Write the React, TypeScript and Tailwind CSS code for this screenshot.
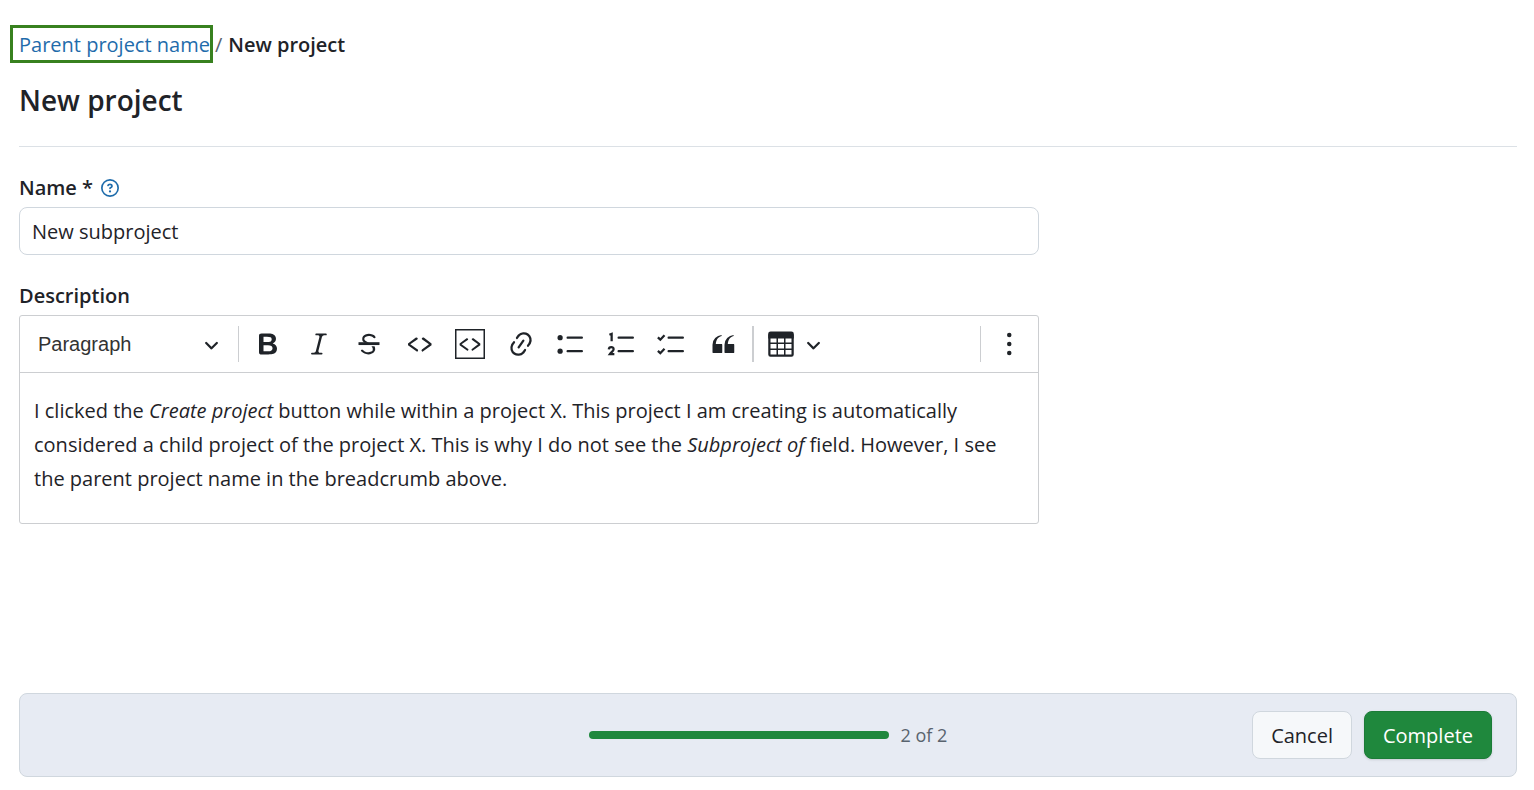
import { useState, ReactNode } from "react";

interface Tool {
  label: string;
  icon: ReactNode;
}

const CODE_PATH =
  "m12.5 5.7 5.2 3.9v1.3l-5.6 4c-.1.2-.3.2-.5.2-.3-.1-.6-.7-.6-1l.3-.4 4.7-3.5L11.5 7l-.2-.2c-.1-.3-.1-.6 0-.8.2-.2.5-.4.8-.4a.8.8 0 0 1 .4.1zm-5.2 0L2 9.6v1.3l5.6 4c.1.2.3.2.5.2.3-.1.7-.7.6-1 0-.1 0-.3-.2-.4l-5-3.5L8.2 7l.2-.2c.1-.3.1-.6 0-.8-.2-.2-.5-.4-.8-.4a.8.8 0 0 0-.3.1z";

const LINES_PATH =
  "M7 5.75c0 .414.336.75.75.75h9.5a.75.75 0 1 0 0-1.5h-9.5a.75.75 0 0 0-.75.75zm0 9c0 .414.336.75.75.75h9.5a.75.75 0 1 0 0-1.5h-9.5a.75.75 0 0 0-.75.75z";

const TOOLS: Tool[] = [
  {
    label: "Bold",
    icon: (
      <path d="M10.187 17H5.773c-.637 0-1.092-.138-1.364-.415-.273-.277-.409-.718-.409-1.323V4.738c0-.617.14-1.062.419-1.332.279-.27.73-.406 1.354-.406h4.68c.69 0 1.288.041 1.793.124.506.083.96.242 1.36.478.341.197.644.447.906.75a3.262 3.262 0 0 1 .808 2.162c0 1.401-.722 2.426-2.167 3.075C15.05 10.175 16 11.315 16 13.01a3.756 3.756 0 0 1-2.296 3.504 6.1 6.1 0 0 1-1.517.377c-.571.073-1.238.11-2 .11zm-.217-6.217H7v4.087h3.069c1.977 0 2.965-.69 2.965-2.072 0-.707-.256-1.22-.768-1.537-.512-.319-1.277-.478-2.296-.478zM7 5.13v3.619h2.606c.729 0 1.292-.067 1.69-.2a1.6 1.6 0 0 0 .91-.765c.165-.267.247-.566.247-.897 0-.707-.26-1.176-.778-1.409-.519-.232-1.31-.348-2.375-.348H7z" />
    ),
  },
  {
    label: "Italic",
    icon: (
      <path d="m9.586 14.633.021.004c-.036.335.095.655.393.962.082.083.173.15.274.201h1.474a.6.6 0 1 1 0 1.2H5.304a.6.6 0 0 1 0-1.2h1.15c.474-.07.809-.182 1.005-.334.157-.122.291-.32.404-.597l2.416-9.55a1.053 1.053 0 0 0-.281-.823 1.12 1.12 0 0 0-.442-.296H8.15a.6.6 0 0 1 0-1.2h6.443a.6.6 0 1 1 0 1.2h-1.195c-.376.056-.65.155-.823.296-.215.175-.423.439-.623.79l-2.366 9.347z" />
    ),
  },
  {
    label: "Strikethrough",
    icon: (
      <>
        <path d="M7 16.4c-.8-.4-1.5-.9-2.2-1.5a.6.6 0 0 1-.2-.5l.3-.6h1c1 1.2 2.1 1.7 3.7 1.7 1 0 1.8-.3 2.3-.6.6-.4.6-1.2.6-1.3.2-1.2-.9-2.1-.9-2.1h2.1c.3.7.4 1.2.4 1.7v.8l-.6 1.2c-.6.8-1.1 1-1.6 1.2a6 6 0 0 1-2.4.6c-1 0-1.8-.3-2.5-.6zM6.8 9 6 8.3c-.4-.5-.5-.8-.5-1.6 0-.7.1-1.3.5-1.8.4-.6 1-1 1.6-1.3a6.3 6.3 0 0 1 4.7 0 4 4 0 0 1 1.7 1l.3.7c0 .1.2.4-.2.7-.4.2-.9.1-1 0a3 3 0 0 0-1.2-1c-.4-.2-1-.3-2-.4-.7 0-1.4.2-2 .6-.8.6-1 .8-1 1.5 0 .8.5 1 1.2 1.5.6.4 1.1.7 1.9 1H6.8z" />
        <path d="M3 10.7V8.8h14v1.9z" />
      </>
    ),
  },
  { label: "Code", icon: <path d={CODE_PATH} /> },
  {
    label: "Code block",
    icon: (
      <>
        <rect x="0.5" y="0.5" width="19" height="19" fill="none" stroke="currentColor" />
        <path d={CODE_PATH} transform="translate(1.3 1.2) scale(.88)" />
      </>
    ),
  },
  {
    label: "Link",
    icon: (
      <path d="m11.077 15 .991-1.416a.75.75 0 1 1 1.229.86l-1.148 1.64a.748.748 0 0 1-.217.206 5.251 5.251 0 0 1-8.503-5.955.741.741 0 0 1 .12-.274l1.147-1.639a.75.75 0 1 1 1.228.86L4.933 10.7l.006.003a3.75 3.75 0 0 0 6.132 4.294l.006.004zm5.494-5.335a.748.748 0 0 1-.12.274l-1.147 1.639a.75.75 0 1 1-1.228-.86l.86-1.23a3.75 3.75 0 0 0-6.144-4.301l-.86 1.229a.75.75 0 0 1-1.229-.86l1.148-1.64a.748.748 0 0 1 .217-.206 5.251 5.251 0 0 1 8.503 5.955zm-4.563-2.532a.75.75 0 0 1 .184 1.045l-3.155 4.505a.75.75 0 1 1-1.229-.86l3.155-4.506a.75.75 0 0 1 1.045-.184z" />
    ),
  },
  {
    label: "Bulleted list",
    icon: (
      <>
        <path d={LINES_PATH} />
        <circle cx="2.75" cy="5.75" r="1.75" />
        <circle cx="2.75" cy="14.75" r="1.75" />
      </>
    ),
  },
  {
    label: "Numbered list",
    icon: (
      <>
        <path d={LINES_PATH} />
        <g fill="none" stroke="currentColor" strokeWidth="1.5">
          <path d="M1.6 3.8 3.1 3.2v5" />
          <path d="M1.2 13.6c.1-2 3.3-2 3.2-.1 0 1-1.3 1.8-2.4 3.2h2.9" />
        </g>
      </>
    ),
  },
  {
    label: "To-do list",
    icon: (
      <>
        <path d={LINES_PATH} />
        <path
          d="m.6 5.6 1.6 1.5 2.8-3M.6 14.6l1.6 1.5 2.8-3"
          fill="none"
          stroke="currentColor"
          strokeWidth="1.5"
        />
      </>
    ),
  },
  {
    label: "Block quote",
    icon: (
      <path d="M3 10.423a6.5 6.5 0 0 1 6.056-6.408l.038.67C6.448 5.423 5.354 7.663 5.22 10H9c.552 0 .5.432.5.986v4.511c0 .554-.448.503-1 .503h-5c-.552 0-.5-.449-.5-1.003v-4.574zm8 0a6.5 6.5 0 0 1 6.056-6.408l.038.67c-2.646.739-3.74 2.979-3.873 5.315H17c.552 0 .5.432.5.986v4.511c0 .554-.448.503-1 .503h-5c-.552 0-.5-.449-.5-1.003v-4.574z" />
    ),
  },
];

function Icon({ children }: { children: ReactNode }) {
  return (
    <svg viewBox="0 0 20 20" className="size-[30px] shrink-0 fill-current" aria-hidden="true">
      {children}
    </svg>
  );
}

function Chevron({ className = "" }: { className?: string }) {
  return (
    <svg viewBox="0 0 10 10" className={`size-[15px] shrink-0 fill-current ${className}`} aria-hidden="true">
      <path d="M.941 4.523a.75.75 0 1 1 1.06-1.06l3.006 3.005 3.005-3.005a.75.75 0 1 1 1.06 1.06l-3.549 3.55a.75.75 0 0 1-1.168-.136L.941 4.523z" />
    </svg>
  );
}

function HelpIcon() {
  return (
    <svg viewBox="0 0 16 16" className="size-[18px] fill-current" aria-hidden="true">
      <path d="M0 8a8 8 0 1 1 16 0A8 8 0 0 1 0 8Zm8-6.5a6.5 6.5 0 1 0 0 13 6.5 6.5 0 0 0 0-13ZM6.92 6.085h.001a.749.749 0 1 1-1.342-.67c.169-.339.436-.701.849-.977C6.845 4.16 7.369 4 8 4a2.756 2.756 0 0 1 1.637.525c.503.377.863.965.863 1.725 0 .448-.115.83-.329 1.15-.205.307-.47.513-.692.662-.109.072-.22.138-.313.195l-.006.004a6.24 6.24 0 0 0-.26.16.952.952 0 0 0-.276.245.75.75 0 0 1-1.248-.832c.184-.264.42-.489.692-.661.103-.067.207-.132.313-.195l.007-.004c.1-.061.182-.11.258-.161a.969.969 0 0 0 .277-.245C8.96 6.514 9 6.427 9 6.25a.612.612 0 0 0-.262-.525A1.27 1.27 0 0 0 8 5.5c-.369 0-.595.09-.74.187a1.01 1.01 0 0 0-.34.398ZM9 11a1 1 0 1 1-2 0 1 1 0 0 1 2 0Z" />
    </svg>
  );
}

function Toolbar() {
  return (
    <div role="toolbar" aria-label="Editor toolbar" className="flex h-[57px] items-center border-b border-[#ccced1]">
      <div className="relative w-[218px]">
        <select
          aria-label="Heading"
          className="h-12 w-full appearance-none bg-transparent pl-[18px] font-['Liberation_Sans',sans-serif] text-[20px] text-[#333333]"
        >
          <option>Paragraph</option>
        </select>
        <Chevron className="pointer-events-none absolute top-[17px] right-[19px]" />
      </div>
      <div className="h-9 w-px bg-[#ccced1]" />
      <div className="mx-1 flex w-[505px]">
        {TOOLS.map((tool) => (
          <button key={tool.label} type="button" aria-label={tool.label} className="flex h-12 flex-1 items-center justify-center">
            <Icon>{tool.icon}</Icon>
          </button>
        ))}
      </div>
      <div className="h-9 w-0.5 bg-[#ccced1]" />
      <button type="button" aria-label="Insert table" className="flex h-12 items-center gap-2.5 px-3">
        <Icon>
          <path d="M3 6v3h4V6H3zm0 4v3h4v-3H3zm0 4v3h4v-3H3zm5 3h4v-3H8v3zm5 0h4v-3h-4v3zm4-4v-3h-4v3h4zm0-4V6h-4v3h4zm1.5 8a1.5 1.5 0 0 1-1.5 1.5H3A1.5 1.5 0 0 1 1.5 17V4c.222-.863 1.068-1.5 2-1.5h13c.932 0 1.778.637 2 1.5v13zM12 13v-3H8v3h4zm0-4V6H8v3h4z" />
          <path d="M1.5 6.4V3.2c0-1 .7-1.5 1.6-1.5h13.8c.9 0 1.6.5 1.6 1.5v3.2z" />
        </Icon>
        <Chevron />
      </button>
      <div className="ml-auto h-9 w-px bg-[#ccced1]" />
      <button type="button" aria-label="Show more items" className="flex h-12 w-[57px] items-center justify-center">
        <Icon>
          <circle cx="9.5" cy="4" r="1.5" />
          <circle cx="9.5" cy="10" r="1.5" />
          <circle cx="9.5" cy="16" r="1.5" />
        </Icon>
      </button>
    </div>
  );
}

export default function App() {
  const [name, setName] = useState("New subproject");

  return (
    <main className="flex min-h-screen flex-col bg-white pt-[25px] pr-[17px] pb-[13px] pl-[19px] font-['Open_Sans',sans-serif] text-[20px] leading-8 text-[#1f2328]">
      <nav aria-label="Breadcrumb" className="flex items-baseline leading-[30px]">
        <a href="#" className="-ml-[9px] border-[3px] border-[#38811f] pt-0.5 pl-1.5 text-[#1f6cab]">
          Parent project name
        </a>
        <span className="mr-1.5 ml-0.5 text-[#59636e]">/</span>
        <span className="font-semibold">New project</span>
      </nav>

      <h1 className="mt-[15px] border-b border-[#dce1e6] pb-6 text-[28px] leading-11 font-semibold">New project</h1>

      <form className="flex flex-1 flex-col" onSubmit={(e) => e.preventDefault()}>
        <div className="mt-[25px] flex items-center gap-2">
          <label htmlFor="name" className="font-semibold">
            Name *
          </label>
          <button type="button" aria-label="Help" className="text-[#1f6cab]">
            <HelpIcon />
          </button>
        </div>
        <input
          id="name"
          type="text"
          value={name}
          onChange={(e) => setName(e.target.value)}
          className="mt-[3px] h-12 w-full max-w-[1020px] rounded-lg border border-[#d0d7de] px-3"
        />

        <div id="description-label" className="mt-[25px] font-semibold">
          Description
        </div>
        <div className="mt-[3px] w-full max-w-[1020px] rounded-[3px] border border-[#ccced1]">
          <Toolbar />
          <div
            role="textbox"
            aria-multiline="true"
            aria-labelledby="description-label"
            contentEditable
            suppressContentEditableWarning
            className="px-3.5 pt-[21px] pb-[27px] leading-[34px] outline-none"
          >
            <p>
              I clicked the <em>Create project</em> button while within a project X. This project I am creating is
              automatically considered a child project of the project X. This is why I do not see the{" "}
              <em>Subproject of</em> field. However, I see the parent project name in the breadcrumb above.
            </p>
          </div>
        </div>

        <footer className="mt-auto grid grid-cols-[1fr_auto_1fr] items-center rounded-lg border border-[#d0d7de] bg-[#e7ebf3] px-6 py-[17px]">
          <div className="col-start-2 flex items-center gap-3">
            <div role="progressbar" aria-label="Progress" aria-valuenow={2} aria-valuemax={2} className="h-2 w-[300px] rounded-full bg-[#1f883d]" />
            <span className="text-[18px] text-[#59636e]">2 of 2</span>
          </div>
          <div className="flex justify-end gap-3">
            <button type="button" className="h-12 rounded-lg border border-[#d0d7de] bg-[#f6f8fa] px-[18px] pt-0.5">
              Cancel
            </button>
            <button type="submit" className="h-12 rounded-lg border border-[#1c7c38] bg-[#1f883d] px-[18px] pt-0.5 text-white shadow-sm">
              Complete
            </button>
          </div>
        </footer>
      </form>
    </main>
  );
}
